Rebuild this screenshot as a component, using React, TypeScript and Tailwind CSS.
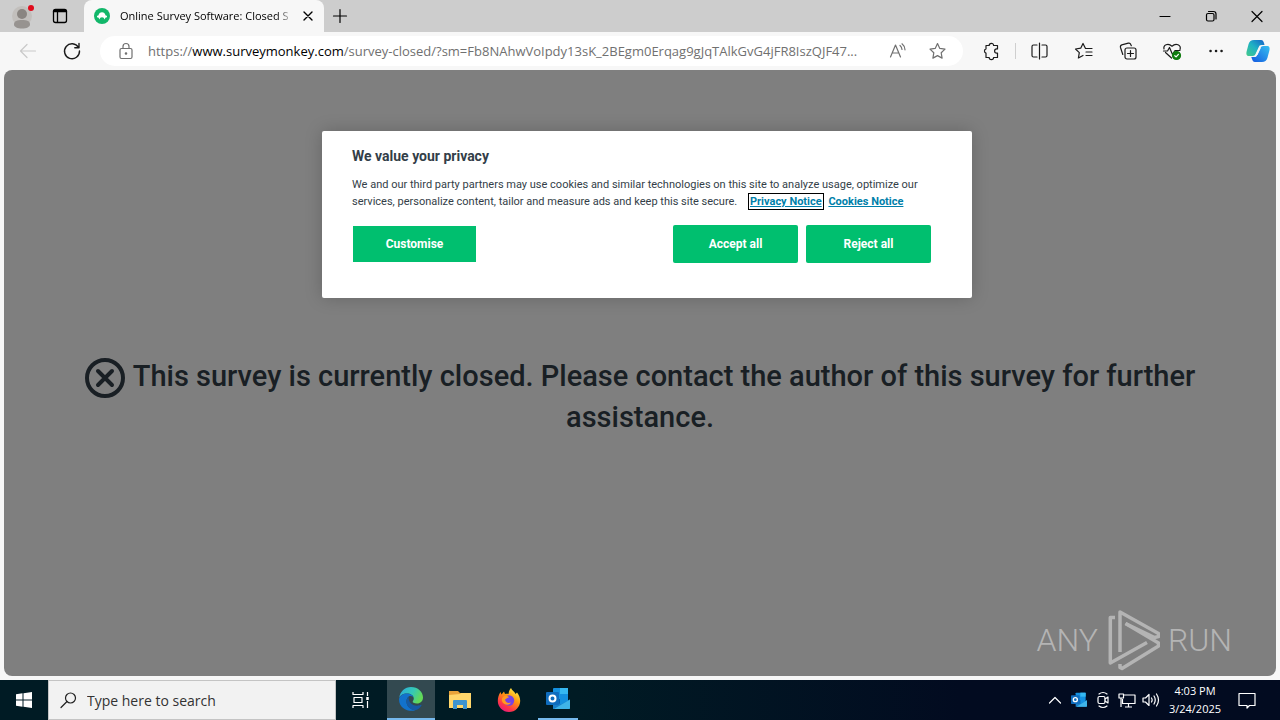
import type { ReactNode } from 'react'

interface IconProps {
  children: ReactNode
  className?: string
}

// Thin line icon on a 20 unit canvas
function LineIcon({ children, className = 'w-5 h-5' }: IconProps) {
  return (
    <svg
      className={`shrink-0 ${className}`}
      viewBox="0 0 20 20"
      fill="none"
      stroke="currentColor"
      strokeWidth="1.2"
      strokeLinecap="round"
      strokeLinejoin="round"
      aria-hidden="true"
    >
      {children}
    </svg>
  )
}

function TitleBar() {
  return (
    <header className="flex h-8 items-stretch bg-[#cdcdcd]">
      <button aria-label="Profile" className="flex w-11 items-center justify-center">
        <svg className="h-7 w-7" viewBox="0 0 28 28" aria-hidden="true">
          <circle cx="14" cy="14" r="10" fill="#c2bfbc" />
          <circle cx="14" cy="12" r="5" fill="#8a8581" />
          <path d="M6 22.500c0-3.500 3-4.500 8-4.500s8 1 8 4.500c0 2.500-3.500 4-8 4s-8-1.500-8-4z" fill="#979390" />
          <circle cx="23" cy="6" r="3" fill="#e00b1c" />
        </svg>
      </button>
      <button aria-label="Tab actions" className="flex w-8 items-center justify-center">
        <LineIcon>
          <rect x="3.500" y="3.500" width="13" height="13" rx="2" strokeWidth="1.300" />
          <path d="M3.500 5.500h13M4 4.500h12M7.500 6v10" strokeWidth="1.300" />
        </LineIcon>
      </button>
      <div className="ml-2 flex w-60 items-center rounded-t-lg bg-[#f7f7f7] pl-2.5">
        <svg className="h-4 w-4 shrink-0" viewBox="0 0 16 16" aria-hidden="true">
          <circle cx="8" cy="8" r="8" fill="#12b76a" />
          <path
            d="M3 8.200c.2-.8 1-.9 1.400-.6C4.800 5.500 6.200 4.300 8 4.300s3.200 1.200 3.600 3.300c.4-.3 1.200-.2 1.400.6.2.9-.5 1.500-1.300 1.400-.4.800-.9 1.400-1.600 1.900.2-1.500-.6-2.200-2.100-2.200s-2.300.7-2.100 2.200c-.7-.5-1.200-1.100-1.600-1.900C3.500 9.700 2.800 9.100 3 8.200z"
            fill="#fff"
          />
        </svg>
        <span className="ml-2.5 w-[174px] overflow-hidden whitespace-nowrap bg-linear-to-r from-black from-90% to-transparent bg-clip-text text-[11px] leading-4 text-transparent">
          Online Survey Software: Closed S
        </span>
        <button aria-label="Close tab" className="ml-1 flex h-5 w-5 items-center justify-center">
          <LineIcon className="h-4 w-4">
            <path d="M5 5l10 10M15 5L5 15" strokeWidth="1.700" />
          </LineIcon>
        </button>
      </div>
      <button aria-label="New tab" className="flex w-8 items-center justify-center">
        <LineIcon>
          <path d="M10 3.500v13M3.500 10h13" />
        </LineIcon>
      </button>
      <div className="ml-auto flex items-stretch">
        <button aria-label="Minimize" className="flex w-[46px] items-center justify-center">
          <LineIcon>
            <path d="M5 10.500h10" />
          </LineIcon>
        </button>
        <button aria-label="Restore" className="flex w-[46px] items-center justify-center">
          <LineIcon>
            <rect x="5.500" y="7.500" width="7.500" height="7.500" rx="1.500" />
            <path d="M7.500 5.500h5q2.500 0 2.500 2.500v5" />
          </LineIcon>
        </button>
        <button aria-label="Close" className="flex w-[46px] items-center justify-center">
          <LineIcon>
            <path d="M5 5.500l10 10M15 5.500l-10 10" />
          </LineIcon>
        </button>
      </div>
    </header>
  )
}

function CopilotLogo() {
  return (
    <svg className="h-6 w-6" viewBox="0 0 24 24" aria-hidden="true">
      <defs>
        <linearGradient id="copilot-a" x1="0" y1="1" x2="1" y2="0">
          <stop offset="0" stopColor="#44c98a" />
          <stop offset="0.5" stopColor="#1fb2c4" />
          <stop offset="1" stopColor="#1560c8" />
        </linearGradient>
        <linearGradient id="copilot-b" x1="0" y1="1" x2="1" y2="0">
          <stop offset="0" stopColor="#1458e0" />
          <stop offset="1" stopColor="#35c0f0" />
        </linearGradient>
      </defs>
      <path
        d="M8 1h7c2 0 2.500 1.500 3 3l.5 2h-3c-1.500 0-2.300.8-2.800 2.300L10 14c-.6 2-1.500 3-3.500 3H3C.5 17 0 15 .6 12.500l2-7.500C3.500 2.500 5 1 8 1z"
        fill="url(#copilot-a)"
      />
      <path
        d="M16 23H9c-2 0-2.500-1.500-3-3l-.7-2h3.200c1.500 0 2.300-.8 2.800-2.300L14 10c.6-2 1.500-3 3.500-3H21c2.500 0 3 2 2.400 4.500l-2 7.500C20.500 21.500 19 23 16 23z"
        fill="url(#copilot-b)"
      />
      <path d="M13 8.500h2L11.500 16h-2z" fill="#f7f7f7" />
    </svg>
  )
}

function Toolbar() {
  return (
    <nav className="flex h-[38px] items-center bg-[#f7f7f7] text-[#1b1b1b]">
      <button aria-label="Back" className="ml-2 flex w-10 justify-center text-[#c9c9c9]">
        <LineIcon>
          <path d="M17.500 10h-15M9 3.500L2.500 10 9 16.500" />
        </LineIcon>
      </button>
      <button aria-label="Refresh" className="ml-1 flex w-10 justify-center">
        <LineIcon>
          <path d="M16.500 6.500a7.500 7.500 0 1 0 1 3.500M17 2.500v4.200h-4.200" strokeWidth="1.400" />
        </LineIcon>
      </button>
      <div className="ml-2 flex h-[30px] min-w-0 flex-1 items-center rounded-full bg-white pl-4 text-[#707070]">
        <LineIcon>
          <rect x="4" y="7.500" width="12" height="10" rx="1.500" />
          <path d="M7 7.500V5.500a3 3 0 0 1 6 0v2" />
          <circle cx="10" cy="12.500" r="0.700" fill="currentColor" />
        </LineIcon>
        <a
          href="#address"
          className="ml-3 min-w-0 flex-1 overflow-hidden whitespace-nowrap text-[13px] leading-5"
        >
          https://<span className="text-black">www.surveymonkey.com</span>
          /survey-closed/?sm=Fb8NAhwVoIpdy13sK_2BEgm0Erqag9gJqTAlkGvG4jFR8IszQJF47...
        </a>
        <button aria-label="Read aloud" className="ml-3">
          <LineIcon>
            <path d="M3.500 16L8.500 4l5 12M5.200 12h6.600M13 4.500q1.800 1.500 2 4M15 2.800q2.800 2.200 3 6" />
          </LineIcon>
        </button>
        <button aria-label="Add to favorites" className="mr-4 ml-5">
          <LineIcon>
            <path d="M10.500 2.500l2.300 4.900 5.200.7-3.800 3.700.9 5.300-4.600-2.500-4.600 2.500.9-5.300L3 8.100l5.200-.7z" />
          </LineIcon>
        </button>
      </div>
      <div className="flex items-center pl-[18px]">
        <button aria-label="Extensions" className="mr-3.5">
          <LineIcon>
            <path d="M5 4.500h3.200a2.200 2.200 0 0 1 4.400 0h3.900v3.400h-.8a2.100 2.100 0 0 0 0 4.200h.8v4.400h-3.900a2.200 2.200 0 0 1-4.400 0H5v-4.400a2.200 2.200 0 0 1 0-4.200z" />
          </LineIcon>
        </button>
        <span className="h-4 w-px bg-[#cfcfcf]" />
        <button aria-label="Split screen" className="ml-3.5">
          <LineIcon>
            <path d="M7 4H3.500Q2 4 2 5.500v9Q2 16 3.500 16H7M12 4h3.500Q17 4 17 5.500v9q0 1.500-1.500 1.500H12M9.500 2v16" />
          </LineIcon>
        </button>
        <button aria-label="Favorites" className="ml-6">
          <LineIcon>
            <path d="M12 7.500h-.5L9 2.500 6.700 7.200l-5.200.8 3.800 3.600-.9 5.400L9 14.500M12 7.500h6M12 11h6M12 14.500h6" />
          </LineIcon>
        </button>
        <button aria-label="Collections" className="ml-6">
          <LineIcon>
            <rect x="7" y="7" width="11" height="11" rx="2" />
            <path d="M12.500 9.500v6M9.500 12.500h6M4.800 13.500l-2.300-7q-.5-2 1.300-2.600l6.500-1.700q1.800-.5 2.500 1.300l.5 1.200" />
          </LineIcon>
        </button>
        <button aria-label="Browser essentials" className="ml-6">
          <LineIcon>
            <path d="M2 8c-1-4 4-6.500 8-2.800C14 1.500 19.500 4 18 8.500M3.500 11.500L9.500 17M1.500 10h4l2-3.500 3 7L13 9.500h5" />
            <circle cx="14.500" cy="14.500" r="4" fill="#107c10" stroke="#107c10" />
            <path d="M12.800 14.700l1.300 1.200 2.300-2.600" stroke="#fff" />
          </LineIcon>
        </button>
        <button aria-label="Settings and more" className="ml-6">
          <LineIcon>
            <path d="M4.500 10h.1M10 10h.1M15.500 10h.1" strokeWidth="2.500" />
          </LineIcon>
        </button>
        <button aria-label="Copilot" className="mr-2.5 ml-5">
          <CopilotLogo />
        </button>
      </div>
    </nav>
  )
}

function CookieDialog() {
  return (
    <div className="absolute inset-0 flex items-start justify-center rounded-lg bg-black/50 pt-[61px] pl-3.5">
      <section
        role="dialog"
        aria-labelledby="privacy-title"
        className="w-[650px] rounded-xs bg-white px-[30px] pt-[15px] pb-[35px] font-[Roboto,sans-serif] text-[#333e48] shadow-[0_0_18px_rgba(0,0,0,0.2)]"
      >
        <h2 id="privacy-title" className="text-[14px] leading-5 font-bold">
          We value your privacy
        </h2>
        <p className="mt-2.5 text-[11px] leading-[17px]">
          We and our third party partners may use cookies and similar technologies on this site to analyze usage, optimize our
          services, personalize content, tailor and measure ads and keep this site secure.{' '}
          <a
            href="#privacy"
            className="mr-1 ml-2.5 font-bold text-[#007faa] underline outline-1 outline-offset-1 outline-black"
          >
            Privacy Notice
          </a>{' '}
          <a href="#cookies" className="font-bold text-[#007faa] underline">
            Cookies Notice
          </a>
        </p>
        <div className="mt-[15px] flex items-center gap-2 pr-[11px] text-[12px] leading-4 font-bold text-white">
          <button className="mr-auto h-9 w-[125px] border-x border-white bg-[#00bf6f]">Customise</button>
          <button className="h-[38px] w-[125px] rounded-xs bg-[#00bf6f]">Accept all</button>
          <button className="h-[38px] w-[125px] rounded-xs bg-[#00bf6f]">Reject all</button>
        </div>
      </section>
    </div>
  )
}

function Watermark() {
  return (
    <div className="absolute right-11 bottom-1 flex h-16 items-center gap-2 font-[Roboto,sans-serif] text-[32px] leading-none font-light text-[#b4b4b4]">
      <span>ANY</span>
      <svg
        className="h-[62px] w-[54px]"
        viewBox="0 0 54 62"
        fill="none"
        stroke="currentColor"
        strokeWidth="3.500"
        strokeLinejoin="round"
        aria-hidden="true"
      >
        <path d="M9 8.500H4.300V54L41 33.500" />
        <path d="M14 43V3l38.500 21.500v3l-4 1L19.500 14.500" />
        <path d="M19.500 14.500L52.500 34v3L16 59.500l-2-1V55" />
      </svg>
      <span>RUN</span>
    </div>
  )
}

function SurveyPage() {
  return (
    <main className="relative mx-1 mb-1 flex-1 rounded-lg bg-white">
      <h1 className="px-20 pt-[286px] text-center font-[Roboto,sans-serif] text-[29px] leading-[41px] font-medium text-[#333e48]">
        <svg className="-my-1 mr-2 inline h-10 w-10" viewBox="0 0 40 40" fill="none" stroke="currentColor" aria-hidden="true">
          <circle cx="20" cy="20" r="18" strokeWidth="4" />
          <path d="M13 13l14 14M27 13L13 27" strokeWidth="4" strokeLinecap="round" />
        </svg>
        This survey is currently closed. Please contact the author of this survey for further assistance.
      </h1>
      <CookieDialog />
      <Watermark />
    </main>
  )
}

function EdgeLogo() {
  return (
    <svg className="h-6 w-6" viewBox="0 0 24 24" aria-hidden="true">
      <defs>
        <linearGradient id="edge-top" x1="0" y1="0" x2="1" y2="0.4">
          <stop offset="0" stopColor="#2aa8e0" />
          <stop offset="0.6" stopColor="#35c9b5" />
          <stop offset="1" stopColor="#63d957" />
        </linearGradient>
      </defs>
      <path d="M.2 11C1 4.500 6 0 12 0c7 0 12 5 12 10.500 0 3.500-2.500 6-6 6-3 0-4.600-1-4.300-1.900.3-.8 1.100-1.500 1.100-3.100C14.800 8.500 11.500 6.500 8 6.500 4 6.500 1 8.500.2 11z" fill="url(#edge-top)" />
      <path d="M.1 11.500C1 8.500 4.500 6.500 8 6.500c3 0 5.600 1.500 6.500 3.500-1-.8-2-1-3-1-2.500 0-4 2.500-4 5.500 0 5 4 8 9 8.800C9.500 25.500-.8 21 .1 11.500z" fill="#1272cc" />
      <path d="M7.500 14.500c0-2 .8-3.800 2.300-4.800-.8 4.500 2.700 9 8.200 9 1.600 0 3-.4 4-.9.500-.2.800.2.500.7C21 21 18.500 23 16 23.200c-4.500-.2-8.500-4-8.500-8.700z" fill="#155aa5" />
    </svg>
  )
}

function OutlookLogo({ className }: { className: string }) {
  return (
    <svg className={className} viewBox="0 0 24 24" aria-hidden="true">
      <rect x="7" y="1" width="15" height="17" rx="1" fill="#1490df" />
      <path d="M14 1h8v6h-8z" fill="#35b8f1" />
      <path d="M7 12h7v6H7z" fill="#0a5eab" />
      <path d="M7 22V12.500l8 5 9-5V21q0 1-1 1z" fill="#1a7fc9" />
      <path d="M8 22l16-9.500V21q0 1-1 1z" fill="#3fb4e8" />
      <rect x="0" y="5" width="13" height="13" rx="1" fill="#0f6cbd" />
      <circle cx="6.500" cy="11.500" r="3" fill="none" stroke="#fff" strokeWidth="2" />
    </svg>
  )
}

function FolderLogo() {
  return (
    <svg className="h-6 w-6" viewBox="0 0 24 24" aria-hidden="true">
      <path d="M1 3h9l2 2h11v15H1z" fill="#e8a33a" />
      <path d="M1 7l11-1 1-1h10v15H1z" fill="#ffd66b" />
      <path d="M5 21v-8q0-1 1-1h12q1 0 1 1v8h-4v-4H9v4z" fill="#3d93cf" />
    </svg>
  )
}

function FirefoxLogo() {
  return (
    <svg className="h-6 w-6" viewBox="0 0 24 24" aria-hidden="true">
      <defs>
        <linearGradient id="fox" x1="0.8" y1="0" x2="0.2" y2="1">
          <stop offset="0" stopColor="#fff44f" />
          <stop offset="0.4" stopColor="#ff980e" />
          <stop offset="0.75" stopColor="#ff3647" />
          <stop offset="1" stopColor="#e31587" />
        </linearGradient>
      </defs>
      <path
        d="M14 0c1 2.500 3.500 3.500 4.500 6l1.500-1.500c1.800 2.300 3.200 5 3.200 8.200C23.200 19 18.200 24 12 24S.8 19 .8 13c0-3.500 1-6.500 2.700-9l1 2.500L7 3.500 8 6c1.500-.5 2.500-.4 3.500 0 .2-2.500 1-4.500 2.500-6z"
        fill="url(#fox)"
      />
      <circle cx="12" cy="12.500" r="5.200" fill="#7542e5" />
      <path d="M6 9c2-2 5-1.500 6 .5-2 0-2.500 1.500-4 2 .5 3 3 4 6 3-1.500 3.500-7.500 3-9-1.500-.4-1.500 0-3 1-4z" fill="#ff9b20" />
    </svg>
  )
}

function Taskbar() {
  return (
    <footer className="flex h-10 items-stretch bg-linear-to-r from-[#001b24] from-45% to-[#020b20] to-75% text-white">
      <button aria-label="Start" className="flex w-12 items-center justify-center">
        <svg className="h-4 w-4" viewBox="0 0 16 16" fill="#fff" aria-hidden="true">
          <path d="M0 2.200l6.500-.9v6.200H0zM7.500 1.200L16 0v7.500H7.500zM0 8.500h6.500v6.200L0 13.800zM7.500 8.500H16V16l-8.500-1.200z" />
        </svg>
      </button>
      <label className="flex w-[288px] items-center border border-[#c4c4c4] bg-[#f2f2f2] pl-2.5 text-[#222]">
        <LineIcon>
          <circle cx="11.500" cy="8" r="5" />
          <path d="M8 11.500L2 17.500" />
        </LineIcon>
        <input
          aria-label="Search"
          placeholder="Type here to search"
          className="ml-2 min-w-0 flex-1 bg-transparent text-[14px] outline-none placeholder:text-[#333]"
        />
      </label>
      <button aria-label="Task View" className="flex w-[51px] items-center justify-center">
        <LineIcon>
          <path d="M1 2v2.500h10V2M1 18v-2.500h10V18M2 7.500h8v5H2zM15.500 2v4M15.500 11v7" strokeLinecap="butt" />
          <path d="M15.500 7v3" strokeWidth="2.500" strokeLinecap="butt" />
        </LineIcon>
      </button>
      <button aria-label="Microsoft Edge" className="flex w-12 items-center justify-center border-b-2 border-[#76b9ed] bg-[#334950]">
        <EdgeLogo />
      </button>
      <button aria-label="File Explorer" className="flex w-[49px] items-center justify-center">
        <FolderLogo />
      </button>
      <button aria-label="Firefox" className="flex w-[49px] items-center justify-center">
        <FirefoxLogo />
      </button>
      <button aria-label="Outlook" className="ml-[5px] flex w-10 items-center justify-center border-b-2 border-[#76b9ed]">
        <OutlookLogo className="h-6 w-6" />
      </button>
      <div className="ml-auto flex items-center">
        <button aria-label="Show hidden icons" className="mr-0.5">
          <LineIcon>
            <path d="M4.500 13L10 7.500l5.500 5.500" />
          </LineIcon>
        </button>
        <button aria-label="Outlook notifications" className="mx-1">
          <OutlookLogo className="h-4 w-4" />
        </button>
        <button aria-label="Meet Now" className="mx-0.5">
          <LineIcon>
            <rect x="5" y="6.500" width="7" height="7" rx="1.500" />
            <path d="M12 9l3-2v6l-3-2M6 4q4-3 8 0M6 16q4 3 8 0" />
          </LineIcon>
        </button>
        <button aria-label="Network" className="mx-0.5">
          <LineIcon>
            <path d="M6.500 5H18v8.500H5.500V9M11.500 13.500V17M8 17h7M2 4h4.500v4H2zM4 8v9" strokeLinecap="butt" />
          </LineIcon>
        </button>
        <button aria-label="Volume" className="mx-0.5">
          <LineIcon>
            <path d="M2 8h2.500L8 4.500v11L4.500 12H2zM10.500 8q1.300 2 0 4M13 6q2.500 4 0 8M15.500 4q4 6 0 12" />
          </LineIcon>
        </button>
        <time className="ml-1 w-14 text-center text-[11px] leading-[18px]">
          4:03 PM
          <br />
          3/24/2025
        </time>
        <button aria-label="Notifications" className="mr-[23px] ml-3.5">
          <LineIcon>
            <path d="M2 3.500h16v12h-5.500L10 18v-2.500H2z" strokeLinecap="butt" />
          </LineIcon>
        </button>
      </div>
    </footer>
  )
}

export default function App() {
  return (
    <div className="flex min-h-screen flex-col bg-[#f7f7f7] font-['Open_Sans','Noto_Sans',sans-serif] text-black">
      <TitleBar />
      <Toolbar />
      <SurveyPage />
      <Taskbar />
    </div>
  )
}
